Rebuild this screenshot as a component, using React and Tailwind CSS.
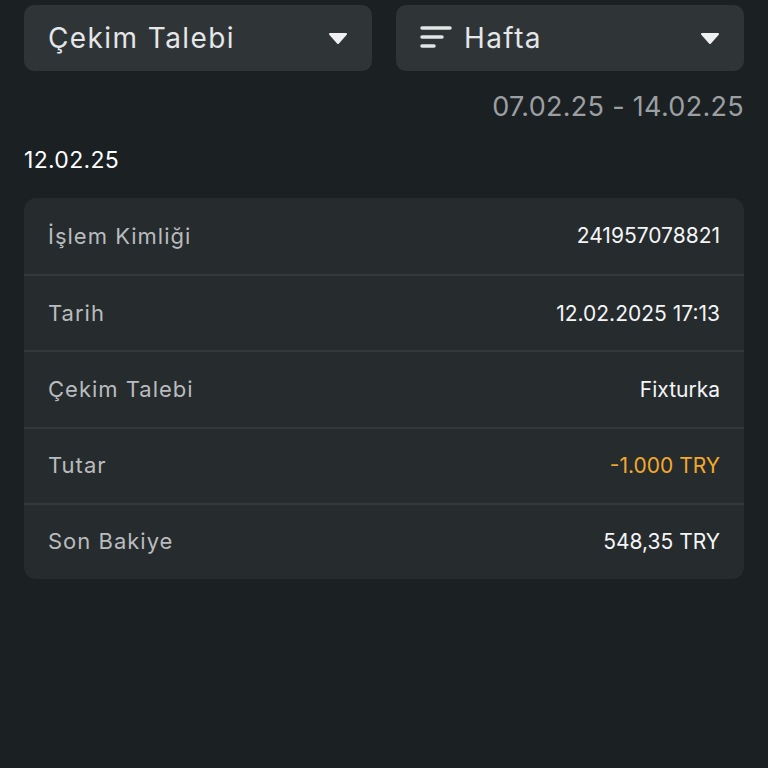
import React from "react";

const rows = [
  { label: "İşlem Kimliği", value: "241957078821" },
  { label: "Tarih", value: "12.02.2025 17:13" },
  { label: "Çekim Talebi", value: "Fixturka" },
  { label: "Tutar", value: "-1.000 TRY", accent: true },
  { label: "Son Bakiye", value: "548,35 TRY" },
];

function Caret() {
  return (
    <svg width="20" height="14" viewBox="0 0 20 14" className="shrink-0">
      <path d="M2 3 H18 L10 12 Z" fill="#eef0f1" strokeLinejoin="round" stroke="#eef0f1" strokeWidth="2" />
    </svg>
  );
}

function SortIcon() {
  return (
    <svg width="32" height="28" viewBox="0 0 32 28" className="shrink-0">
      <g stroke="#e3e5e6" strokeWidth="3.5" strokeLinecap="round">
        <line x1="2" y1="4" x2="30" y2="4" />
        <line x1="2" y1="13" x2="22" y2="13" />
        <line x1="2" y1="22" x2="14" y2="22" />
      </g>
    </svg>
  );
}

function Dropdown({ icon, label }) {
  return (
    <div className="flex h-[66px] flex-1 items-center justify-between rounded-[10px] bg-[#2f3437] pl-6 pr-6">
      <div className="flex items-center gap-3">
        {icon}
        <span className="text-[28px] tracking-[1.4px] text-[#e4e6e7]">{label}</span>
      </div>
      <Caret />
    </div>
  );
}

export default function App() {
  return (
    <div
      className="min-h-[768px] w-full bg-[#1b2023] px-6 pt-[5px]"
      style={{ fontFamily: "Inter, 'Noto Sans', sans-serif" }}
    >
      <div className="flex gap-6">
        <Dropdown label="Çekim Talebi" />
        <Dropdown icon={<SortIcon />} label="Hafta" />
      </div>

      <div className="mt-[16px] text-right text-[27px] tracking-[0.3px] leading-[40px] text-[#9c9fa1]">
        07.02.25 - 14.02.25
      </div>

      <div className="mt-[16px] text-[23px] tracking-[0.3px] leading-[34px] text-white">12.02.25</div>

      <div className="mt-[21px] overflow-hidden rounded-[12px] bg-[#262b2e]">
        {rows.map((r, i) => (
          <div
            key={r.label}
            className={
              "flex h-[76.2px] items-center justify-between px-6 " +
              (i > 0 ? "border-t-2 border-[#33383b]" : "")
            }
          >
            <span className="text-[22px] tracking-[1px] text-[#b9bcbe]">{r.label}</span>
            <span className={"text-[21px] " + (r.accent ? "text-[#f2a92c]" : "text-[#f4f5f6]")}>
              {r.value}
            </span>
          </div>
        ))}
      </div>
    </div>
  );
}
